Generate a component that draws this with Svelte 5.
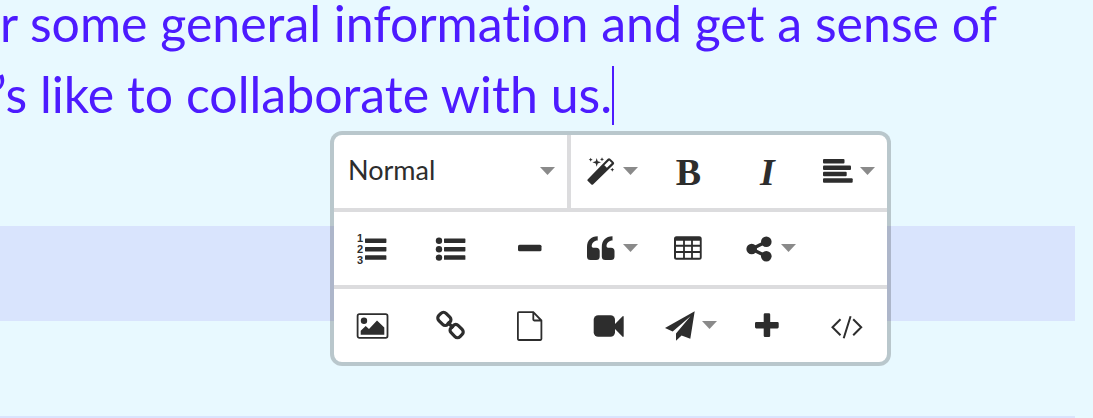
<script>
	let format = $state('Normal');

	const formats = ['Normal', 'Heading 1', 'Heading 2', 'Code'];

	const rows = [
		[
			{ id: 'magic', label: 'Styles', menu: true },
			{ id: 'bold', label: 'Bold' },
			{ id: 'italic', label: 'Italic' },
			{ id: 'align', label: 'Align', menu: true }
		],
		[
			{ id: 'ol', label: 'Ordered list' },
			{ id: 'ul', label: 'Unordered list' },
			{ id: 'hr', label: 'Horizontal line' },
			{ id: 'quote', label: 'Quote', menu: true },
			{ id: 'table', label: 'Insert table' },
			{ id: 'share', label: 'Share', menu: true }
		],
		[
			{ id: 'image', label: 'Insert image' },
			{ id: 'link', label: 'Insert link' },
			{ id: 'file', label: 'Insert file' },
			{ id: 'video', label: 'Insert video' },
			{ id: 'send', label: 'Buttons', menu: true },
			{ id: 'plus', label: 'More' },
			{ id: 'code', label: 'Source code' }
		]
	];
</script>

{#snippet arrow()}
	<svg class="arrow" viewBox="0 0 15 9" aria-hidden="true"><path d="M0 0h15L7.5 8z" /></svg>
{/snippet}

{#snippet icon(id)}
	<svg class="icon" viewBox="0 0 33 33" aria-hidden="true">
		{#if id === 'magic'}
			<path fill-rule="evenodd" d="M2.6 24.4 22.8 3.8q1.2-1.2 2.4 0l3.4 3.3q1.2 1.2 0 2.4L8 29.5q-.8.6-1.6 0l-3.800-3.700q-.6-.7 0-1.400zM19.300 10.300l2.600 2.500 4.900-4.700-2.600-2.500z" />
			<path d="M11.700 3l1 3.200 3.300 1.100-3.300 1.100-1 3.300-1-3.300-3.300-1.100 3.300-1.100zM5.700 2.700l.6 1.400 1.400.6-1.400.6-.6 1.400-.6-1.400-1.400-.6 1.400-.6zM17 2.300l.6 1.400 1.400.6-1.400.6-.6 1.400-.6-1.400-1.400-.6 1.400-.6zM27.300 12.700l.6 1.400 1.400.6-1.400.6-.6 1.400-.6-1.400-1.400-.6 1.400-.6z" />
		{:else if id === 'align'}
			<rect x="1" y="4" width="21.500" height="4.500" rx="1" />
			<rect x="1" y="10.400" width="28" height="4.500" rx="1" />
			<rect x="1" y="16.800" width="23.700" height="4.500" rx="1" />
			<rect x="1" y="23.200" width="29.700" height="4.500" rx="1" />
		{:else if id === 'ol'}
			<text x="1" y="10">1</text>
			<text x="1" y="21">2</text>
			<text x="1" y="32">3</text>
			<rect x="9" y="6.400" width="21.400" height="4.500" rx=".6" />
			<rect x="9" y="14.900" width="21.400" height="4.500" rx=".6" />
			<rect x="9" y="23.300" width="21.400" height="4.500" rx=".6" />
		{:else if id === 'ul'}
			<circle cx="4" cy="8.700" r="3.200" />
			<circle cx="4" cy="17.200" r="3.200" />
			<circle cx="4" cy="25.600" r="3.200" />
			<rect x="9" y="6.400" width="21.400" height="4.500" rx=".6" />
			<rect x="9" y="14.900" width="21.400" height="4.500" rx=".6" />
			<rect x="9" y="23.300" width="21.400" height="4.500" rx=".6" />
		{:else if id === 'hr'}
			<rect x="4" y="12.700" width="23.500" height="6.600" rx="1.600" />
		{:else if id === 'quote'}
			<path id="mark" d="M12.700 4.300C6 4.300 2 8.700 2 15v9.500Q2 28 5.500 28h5.700q3.500 0 3.500-3.500v-5.300q0-3.500-3.500-3.500h-3q-1.500 0-1.500-1.400c0-3.300 2.500-5.900 6-5.900z" />
			<use href="#mark" x="14.800" />
		{:else if id === 'table'}
			<path fill-rule="evenodd" d="M4.500 4.300h22.700q2.500 0 2.500 2.500v18.500q0 2.500-2.500 2.500H4.500Q2 27.800 2 25.300V6.800q0-2.500 2.500-2.500zM4 8.700v4.100h7.100V8.700zM12.900 8.700v4.100h6.200V8.700zM20.900 8.700v4.100h6.900V8.700zM4 14.700v4.200h7.100v-4.200zM12.900 14.700v4.200h6.200v-4.200zM20.900 14.700v4.200h6.900v-4.200zM4 20.900v4.900h7.100v-4.900zM12.900 20.900v4.900h6.200v-4.900zM20.900 20.900v4.900h6.900v-4.900z" />
		{:else if id === 'share'}
			<path class="line" stroke-width="3.400" d="M23.300 9.700 8.700 17l14.600 7.300" />
			<circle cx="8.700" cy="17" r="5.300" />
			<circle cx="23.300" cy="9.700" r="5.300" />
			<circle cx="23.300" cy="24.300" r="5.300" />
		{:else if id === 'image'}
			<rect class="line" x="1.600" y="5.200" width="29.900" height="23.700" rx="1.800" stroke-width="1.800" />
			<circle cx="8" cy="11.700" r="3.200" />
			<path d="M4.700 25.700v-4l5-4.600 3.300 2.900L21 11.500l7.300 6.900v7.300z" />
		{:else if id === 'link'}
			<g class="line" stroke-width="3.200">
				<rect x="3" y="4.900" width="12.600" height="10.200" rx="3.600" transform="rotate(45 9.500 10)" />
				<rect x="15.400" y="16.800" width="12.600" height="10.200" rx="3.600" transform="rotate(45 21.500 21.900)" />
				<path d="M12.300 13l6.200 6" />
			</g>
		{:else if id === 'file'}
			<path class="line" stroke-width="1.800" stroke-linejoin="round" d="M19.300 3.200H4.800q-.9 0-.9.9v26q0 .9.900.9h21.700q.9 0 .9-.9V11.500L19.300 3.200v7.400q0 .9.900.9h7.200" />
		{:else if id === 'video'}
			<rect x=".7" y="6.300" width="21.300" height="21.400" rx="4.500" />
			<path d="M22 15l7.600-7.700q1.100-.6 1.100.6v19.200q0 1.200-1.100.6L22 20z" />
		{:else if id === 'send'}
			<path d="M30.700 2.300 1 19l7.700 3.600L26.500 7.300 12 24.500v7.300l5.600-5.300 8.700 3.200z" />
		{:else if id === 'plus'}
			<path d="M14 4.300h3.900q1.300 0 1.300 1.300v7.300h7.200q1.300 0 1.300 1.300v3.900q0 1.300-1.300 1.300h-7.200v7.300q0 1.300-1.300 1.300H14q-1.300 0-1.300-1.300v-7.300H5.300Q4 19.400 4 18.100v-3.900q0-1.300 1.300-1.300h7.400V5.600q0-1.300 1.300-1.300z" />
		{:else if id === 'code'}
			<path class="line" stroke-width="2" d="M10.500 10.300l-8 8 8 7.900M20.600 7.300l-6.900 22M23.200 10.300l8 8-8 7.900" />
		{/if}
	</svg>
{/snippet}

<main class="page">
	<div class="editor">
		<p class="copy">
			<span>r some general information and get a sense of</span>
			<span class="second">’s like to collaborate with us.<i class="caret"></i></span>
		</p>

		<div class="toolbar" role="toolbar" aria-label="Text formatting">
			{#each rows as row, i}
				<div class="row">
					{#if i === 0}
						<div class="format">
							<select bind:value={format} aria-label="Paragraph format">
								{#each formats as f}
									<option>{f}</option>
								{/each}
							</select>
							{@render arrow()}
						</div>
					{/if}
					{#each row as tool}
						<button type="button" class:menu={tool.menu} aria-label={tool.label}>
							{#if tool.id === 'bold'}
								<b>B</b>
							{:else if tool.id === 'italic'}
								<b><em>I</em></b>
							{:else}
								{@render icon(tool.id)}
							{/if}
							{#if tool.menu}
								{@render arrow()}
							{/if}
						</button>
					{/each}
				</div>
			{/each}
		</div>
	</div>

	<div class="stripes">
		<div class="stripe"></div>
		<div class="stripe"></div>
	</div>
</main>

<style>
	:global(body) {
		margin: 0;
		background: #e8f9ff;
	}

	.page {
		height: 100vh;
		overflow: hidden;
		background: #e8f9ff;
	}

	.editor {
		position: relative;
		padding-bottom: 108px;
	}

	.copy {
		display: flex;
		flex-direction: column;
		gap: 24px;
		margin: 0;
		color: #4d1bff;
		font-family: Lato, sans-serif;
		font-size: 50px;
		font-variant-ligatures: none;
		line-height: 47px;
		white-space: nowrap;
	}

	.second {
		margin-left: -4px;
	}

	/* taller than the line box, the margins keep it from stretching the line */
	.caret {
		display: inline-block;
		width: 2px;
		height: 59px;
		margin: -12px 0;
		background: #4d1bff;
	}

	/* floats over the text and the stripes below it */
	.toolbar {
		position: absolute;
		top: 131px;
		left: 330px;
		z-index: 1;
		border: 4px solid rgba(0, 0, 0, 0.2);
		border-radius: 12px;
		background: #fff;
		background-clip: padding-box;
	}

	.row {
		display: grid;
		grid-template-columns: repeat(7, 79px);
		grid-auto-rows: 73px;
	}

	.row + .row {
		border-top: 4px solid #dcdcde;
	}

	.format {
		grid-column: span 3;
		display: grid;
		align-items: center;
		border-right: 4px solid #dcdcde;
	}

	.format select,
	.format .arrow {
		grid-area: 1 / 1;
	}

	.format .arrow {
		justify-self: end;
		margin-right: 12px;
		pointer-events: none;
	}

	select {
		width: 100%;
		height: 100%;
		padding: 0 32px 4px 14px;
		border: 0;
		border-radius: 8px 0 0 0;
		background: none;
		color: #2d2d2d;
		font-family: Lato, sans-serif;
		font-size: 27px;
		appearance: none;
	}

	button {
		display: flex;
		align-items: center;
		justify-content: center;
		padding: 0 2px 0 0;
		border: 0;
		background: none;
		color: #2d2d2d;
		font-family: "Liberation Serif", serif;
		font-size: 38px;
		line-height: 40px;
		cursor: pointer;
	}

	button.menu {
		gap: 5px;
		padding: 0 12px 0 14px;
	}

	.icon {
		flex: none;
		width: 33px;
		height: 33px;
		fill: currentColor;
	}

	.icon text {
		font: bold 11px "Liberation Sans", sans-serif;
	}

	.line {
		fill: none;
		stroke: currentColor;
	}

	.arrow {
		flex: none;
		width: 15px;
		height: 9px;
		fill: #8a8a8a;
	}

	.stripes {
		display: flex;
		flex-direction: column;
		gap: 95px;
		margin-right: 18px;
	}

	.stripe {
		flex: none;
		height: 95px;
		background: #d9e4fd;
	}
</style>
